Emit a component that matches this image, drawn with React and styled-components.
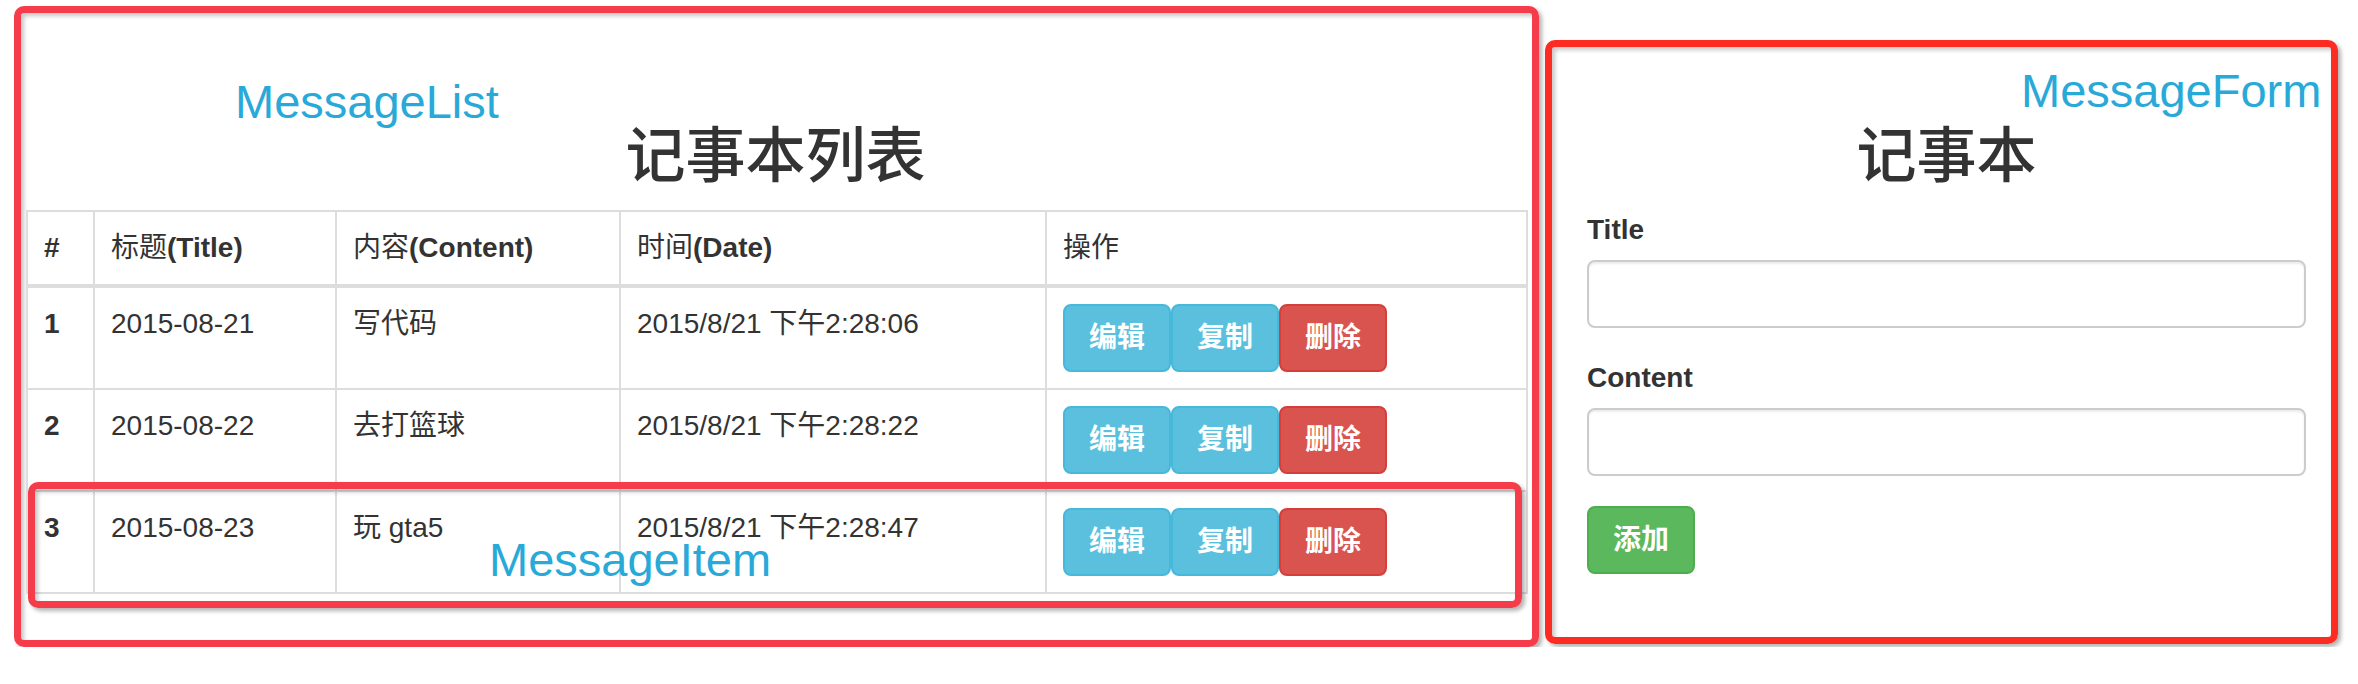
import React from 'react'
import styled, { createGlobalStyle } from 'styled-components'

const GlobalStyle = createGlobalStyle`
  html, body {
    margin: 0;
    padding: 0;
    background: #fff;
  }
  body {
    font-family: "Liberation Sans", "Noto Sans CJK SC", sans-serif;
    font-size: 28px;
    line-height: 40px;
    color: #333;
  }
  * {
    box-sizing: border-box;
  }
`;

const Page = styled.div`
  display: flex;
  align-items: flex-start;
  gap: 6px;
  padding: 6px 0 0 14px;
`;

// hand-drawn annotation frame round a component
const Frame = styled.section`
  position: relative;
  border: 7px solid ${p => p.$color};
  border-radius: 10px;
  box-shadow: 3px 3px 4px rgba(0,0,0,0.3), inset 3px 3px 4px rgba(0,0,0,0.22);
`;

const ListPanel = styled(Frame)`
  width: 1525px;
  height: 641px;
  padding: 111px 7px 0 5px;
`;

const FormPanel = styled(Frame)`
  width: 793px;
  height: 604px;
  margin-top: 34px;
  padding: 77px 25px 0 35px;
`;

const Tag = styled.span`
  position: absolute;
  left: ${p => p.$x}px;
  top: ${p => p.$y}px;
  font-family: "Liberation Sans", sans-serif;
  font-size: 47px;
  line-height: 36px;
  color: #29a9d8;
  white-space: nowrap;
  pointer-events: none;
`;

const ItemHighlight = styled.div`
  position: absolute;
  left: 7px;
  top: 469px;
  width: 1494px;
  height: 126px;
  border: 7px solid #f43c4a;
  border-radius: 10px;
  box-shadow: 3px 3px 4px rgba(0,0,0,0.3), inset 3px 3px 4px rgba(0,0,0,0.22);
  pointer-events: none;
`;

const Heading = styled.h2`
  margin: 0 0 20px;
  font-size: 60px;
  line-height: 66px;
  font-weight: 500;
  text-align: center;
`;

const Table = styled.table`
  width: 1500px;
  table-layout: fixed;
  border-collapse: collapse;
`;

const HeadCell = styled.th`
  border: 2px solid #ddd;
  border-bottom-width: 4px;
  padding: 16px;
  text-align: left;
  font-weight: bold;
  vertical-align: bottom;
`;

// the Chinese part of a bold heading has no bold face in the original
const Han = styled.span`
  font-weight: normal;
`;

const Cell = styled.td`
  border: 2px solid #ddd;
  padding: 16px;
  vertical-align: top;
  font-weight: ${p => (p.$bold ? 'bold' : 'normal')};
`;

const Actions = styled.div`
  display: flex;
`;

const Btn = styled.button`
  height: 68px;
  padding: 0 24px;
  font-family: inherit;
  font-size: 28px;
  font-weight: 600;
  line-height: 40px;
  color: #fff;
  background: ${p => (p.$danger ? '#d9534f' : '#5bc0de')};
  border: 2px solid ${p => (p.$danger ? '#d43f3a' : '#46b8da')};
  border-radius: 8px;
  cursor: pointer;
`;

const FormGroup = styled.div`
  margin-bottom: 30px;
`;

const Label = styled.label`
  display: block;
  margin-bottom: 10px;
  font-weight: bold;
`;

const Input = styled.input`
  display: block;
  width: 100%;
  height: 68px;
  padding: 12px 24px;
  font-family: inherit;
  font-size: 28px;
  color: #555;
  background: #fff;
  border: 2px solid #ccc;
  border-radius: 8px;
  box-shadow: inset 0 2px 2px rgba(0,0,0,0.075);
`;

const AddButton = styled.button`
  height: 68px;
  padding: 0 24px;
  font-family: inherit;
  font-size: 28px;
  font-weight: 600;
  line-height: 40px;
  color: #fff;
  background: #5cb85c;
  border: 2px solid #4cae4c;
  border-radius: 8px;
`;

const messages = [
  { id: 1, title: '2015-08-21', content: '写代码', date: '2015/8/21 下午2:28:06' },
  { id: 2, title: '2015-08-22', content: '去打篮球', date: '2015/8/21 下午2:28:22' },
  { id: 3, title: '2015-08-23', content: '玩 gta5', date: '2015/8/21 下午2:28:47' },
];

const MessageItem = ({ item }) => (
  <tr>
    <Cell $bold>{item.id}</Cell>
    <Cell>{item.title}</Cell>
    <Cell>{item.content}</Cell>
    <Cell>{item.date}</Cell>
    <Cell>
      <Actions>
        <Btn>编辑</Btn>
        <Btn>复制</Btn>
        <Btn $danger>删除</Btn>
      </Actions>
    </Cell>
  </tr>
);

const MessageList = () => (
  <ListPanel $color="#f43c4a">
    <Tag $x={214} $y={71}>MessageList</Tag>
    <Heading>记事本列表</Heading>
    <Table>
      <colgroup>
        <col style={{ width: 67 }} />
        <col style={{ width: 242 }} />
        <col style={{ width: 284 }} />
        <col style={{ width: 426 }} />
        <col style={{ width: 481 }} />
      </colgroup>
      <thead>
        <tr>
          <HeadCell>#</HeadCell>
          <HeadCell><Han>标题</Han>(Title)</HeadCell>
          <HeadCell><Han>内容</Han>(Content)</HeadCell>
          <HeadCell><Han>时间</Han>(Date)</HeadCell>
          <HeadCell><Han>操作</Han></HeadCell>
        </tr>
      </thead>
      <tbody>
        {messages.map(m => <MessageItem key={m.id} item={m} />)}
      </tbody>
    </Table>
    <ItemHighlight>
      <Tag $x={454} $y={53}>MessageItem</Tag>
    </ItemHighlight>
  </ListPanel>
);

const MessageForm = () => (
  <FormPanel $color="#fc2c23">
    <Tag $x={469} $y={26}>MessageForm</Tag>
    <Heading>记事本</Heading>
    <form onSubmit={e => e.preventDefault()}>
      <FormGroup>
        <Label>Title</Label>
        <Input type="text" />
      </FormGroup>
      <FormGroup>
        <Label>Content</Label>
        <Input type="text" />
      </FormGroup>
      <AddButton type="submit">添加</AddButton>
    </form>
  </FormPanel>
);

export default function App() {
  return (
    <>
      <GlobalStyle />
      <Page>
        <MessageList />
        <MessageForm />
      </Page>
    </>
  );
}
